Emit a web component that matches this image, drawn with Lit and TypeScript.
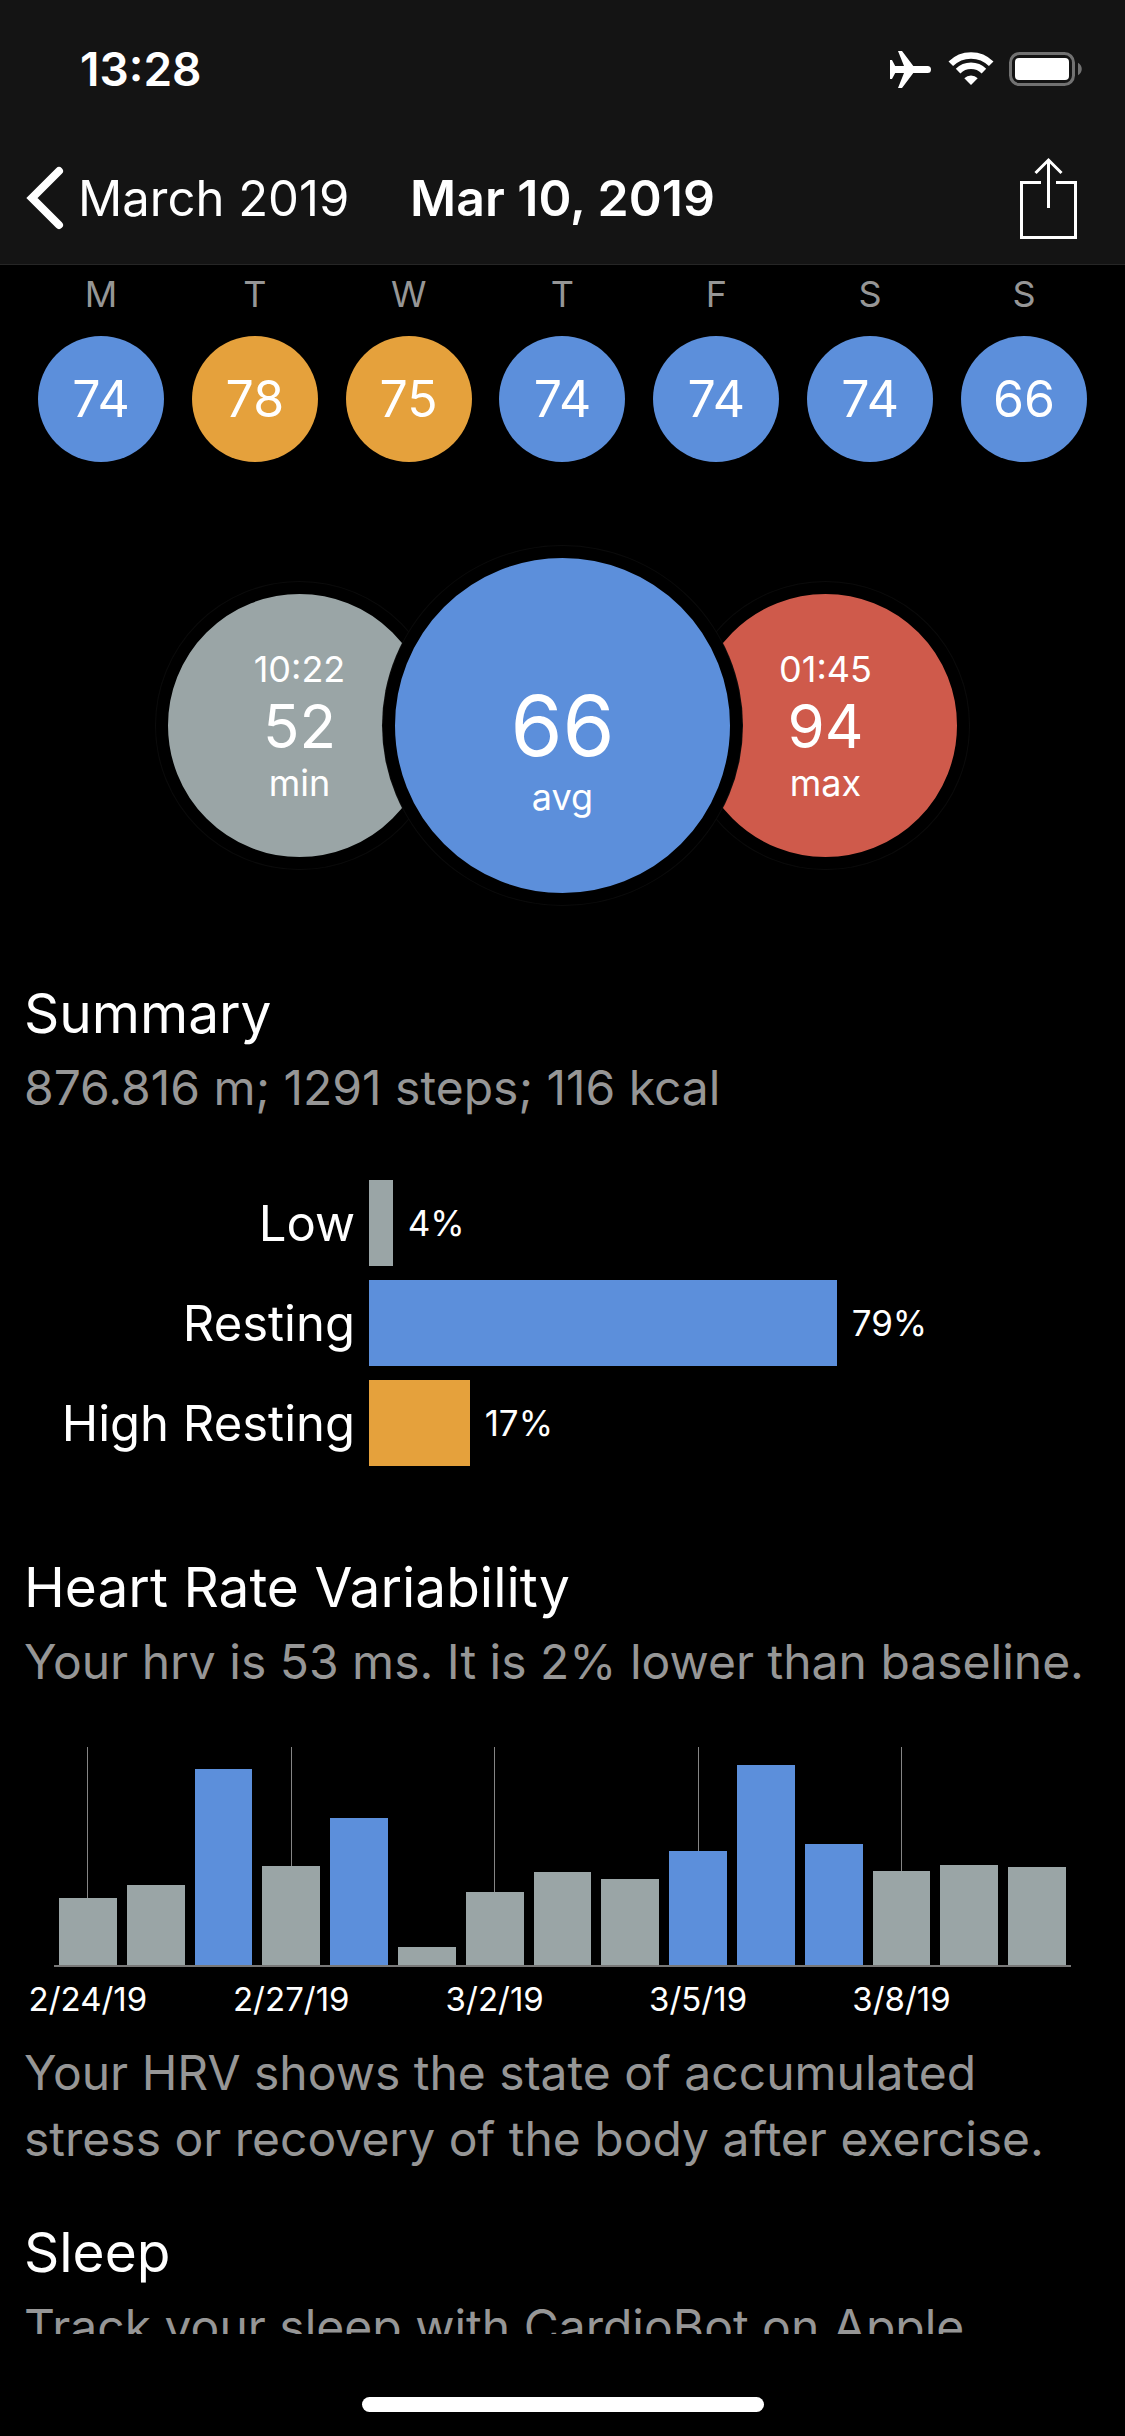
import { LitElement, html, css, svg } from "lit";
import { customElement, property } from "lit/decorators.js";
import { classMap } from "lit/directives/class-map.js";
import { styleMap } from "lit/directives/style-map.js";

type Tone = "low" | "resting" | "high" | "peak";

interface Day {
  letter: string;
  name: string;
  bpm: number;
  tone: Tone;
}

interface Zone {
  label: string;
  percent: number;
  tone: Tone;
}

interface HrvDay {
  value: number;
  tone: Tone;
  date?: string;
}

const DAYS: Day[] = [
  { letter: "M", name: "Monday", bpm: 74, tone: "resting" },
  { letter: "T", name: "Tuesday", bpm: 78, tone: "high" },
  { letter: "W", name: "Wednesday", bpm: 75, tone: "high" },
  { letter: "T", name: "Thursday", bpm: 74, tone: "resting" },
  { letter: "F", name: "Friday", bpm: 74, tone: "resting" },
  { letter: "S", name: "Saturday", bpm: 74, tone: "resting" },
  { letter: "S", name: "Sunday", bpm: 66, tone: "resting" },
];

const ZONES: Zone[] = [
  { label: "Low", percent: 4, tone: "low" },
  { label: "Resting", percent: 79, tone: "resting" },
  { label: "High Resting", percent: 17, tone: "high" },
];

const HRV_MAX = 218;

const HRV: HrvDay[] = [
  { value: 67, tone: "low", date: "2/24/19" },
  { value: 80, tone: "low" },
  { value: 196, tone: "resting" },
  { value: 99, tone: "low", date: "2/27/19" },
  { value: 147, tone: "resting" },
  { value: 18, tone: "low" },
  { value: 73, tone: "low", date: "3/2/19" },
  { value: 93, tone: "low" },
  { value: 86, tone: "low" },
  { value: 114, tone: "resting", date: "3/5/19" },
  { value: 200, tone: "resting" },
  { value: 121, tone: "resting" },
  { value: 94, tone: "low", date: "3/8/19" },
  { value: 100, tone: "low" },
  { value: 98, tone: "low" },
];

const tones = css`
  .low {
    background-color: #9aa5a6;
  }
  .resting {
    background-color: #5c8fdb;
  }
  .high {
    background-color: #e5a13c;
  }
  .peak {
    background-color: #cf5a4b;
  }
`;

@customElement("status-bar")
export class StatusBar extends LitElement {
  static styles = css`
    :host {
      display: flex;
      justify-content: space-between;
      align-items: center;
      height: 54px;
      padding: 42px 42px 36px 80px;
    }
    .time {
      font-size: 46px;
      font-weight: 600;
      line-height: 54px;
    }
    .icons {
      display: flex;
      align-items: center;
    }
    .icons svg {
      display: block;
    }
  `;

  render() {
    return html`
      <div class="time">13:28</div>
      <div class="icons">
        <svg width="194" height="44" viewBox="0 0 194 44" aria-hidden="true">
          ${svg`
            <path fill="#fff" d="M1 13h2l3.200 6H15L9 4h4l11.300 15h14.200a3.500 3.500 0 0 1 0 7H24.300L13 41H9l6-15H6.200L3 32H1z"/>
            <g fill="none" stroke="#fff" stroke-width="6.500">
              <path d="M61.800 16.800a28.600 28.600 0 0 1 40.400 0"/>
              <path d="M69.100 24.100a18.200 18.200 0 0 1 25.800 0"/>
            </g>
            <path fill="#fff" d="M75.300 31.300a9.500 9.500 0 0 1 13.400 0L82 38z"/>
            <rect x="121.500" y="6.500" width="63" height="31" rx="9" fill="none" stroke="#727272" stroke-width="3"/>
            <rect x="126" y="11" width="54" height="22" rx="4" fill="#fff"/>
            <path fill="#727272" d="M189 15.700c5 3 5 9.600 0 12.600z"/>
          `}
        </svg>
      </div>
    `;
  }
}

@customElement("nav-bar")
export class NavBar extends LitElement {
  static styles = css`
    :host {
      display: grid;
      grid-template-columns: 1fr auto 1fr;
      align-items: center;
      height: 132px;
      padding: 0 26px;
      border-bottom: 1px solid #262626;
    }
    .back {
      display: flex;
      align-items: center;
      gap: 14px;
      justify-self: start;
      color: #fff;
      font-size: 49px;
      text-decoration: none;
      white-space: nowrap;
    }
    .title {
      margin: 0;
      font-size: 50px;
      font-weight: 600;
      white-space: nowrap;
    }
    .share {
      justify-self: end;
      margin: 0 22px 0 0;
      padding: 0;
      border: 0;
      background: none;
      color: #fff;
    }
    svg {
      display: block;
    }
  `;

  render() {
    return html`
      <a class="back" href="#march-2019">
        <svg width="38" height="66" viewBox="0 0 38 66" aria-hidden="true">
          <path
            d="M33 6L6 33l27 27"
            fill="none"
            stroke="#fff"
            stroke-width="8"
            stroke-linecap="round"
          />
        </svg>
        March 2019
      </a>
      <h1 class="title">Mar 10, 2019</h1>
      <button class="share" type="button" aria-label="Share">
        <svg width="57" height="82" viewBox="0 0 57 82" aria-hidden="true">
          <path
            d="M21 25.500H1.500V80.500H55.500V25.500H36M28.500 51V2.500M15.500 16L28.500 3L41.500 16"
            fill="none"
            stroke="#fff"
            stroke-width="3"
          />
        </svg>
      </button>
    `;
  }
}

@customElement("week-strip")
export class WeekStrip extends LitElement {
  @property({ attribute: false }) days: Day[] = [];

  static styles = [
    tones,
    css`
      :host {
        display: flex;
        justify-content: space-between;
        padding: 5px 38px 0;
      }
      .day {
        display: flex;
        flex-direction: column;
        align-items: center;
        gap: 18px;
        margin: 0;
        padding: 0;
        border: 0;
        background: none;
        font: inherit;
        color: #fff;
      }
      .letter {
        font-size: 36px;
        line-height: 48px;
        color: #969696;
      }
      .bubble {
        display: flex;
        align-items: center;
        justify-content: center;
        width: 126px;
        height: 126px;
        border-radius: 50%;
        font-size: 50px;
      }
    `,
  ];

  render() {
    return this.days.map(
      (d) => html`
        <button class="day" type="button" title=${d.name}>
          <span class="letter">${d.letter}</span>
          <span class=${classMap({ bubble: true, [d.tone]: true })}>${d.bpm}</span>
        </button>
      `
    );
  }
}

@customElement("rate-circles")
export class RateCircles extends LitElement {
  static styles = [
    tones,
    css`
      :host {
        display: flex;
        justify-content: center;
        align-items: center;
      }
      .circle {
        display: flex;
        flex-direction: column;
        align-items: center;
        justify-content: center;
        box-sizing: border-box;
        width: 287px;
        height: 287px;
        border: 12px solid #000;
        border-radius: 50%;
        box-shadow: 0 0 0 1px #0b0b0b;
        font-size: 36px;
        line-height: 48px;
      }
      .circle .value {
        font-size: 60px;
        line-height: 66px;
      }
      .main {
        z-index: 1;
        width: 359px;
        height: 359px;
        margin: 0 -60px;
        padding-top: 48px;
      }
      .main .value {
        font-size: 84px;
        line-height: 94px;
      }
    `,
  ];

  render() {
    return html`
      <div class="circle low">
        <span>10:22</span>
        <span class="value">52</span>
        <span>min</span>
      </div>
      <div class="circle main resting">
        <span class="value">66</span>
        <span>avg</span>
      </div>
      <div class="circle peak">
        <span>01:45</span>
        <span class="value">94</span>
        <span>max</span>
      </div>
    `;
  }
}

@customElement("zone-bars")
export class ZoneBars extends LitElement {
  @property({ attribute: false }) zones: Zone[] = [];

  static styles = [
    tones,
    css`
      :host {
        display: flex;
        flex-direction: column;
        gap: 14px;
      }
      .row {
        display: grid;
        grid-template-columns: 355px 1fr;
        column-gap: 14px;
        align-items: center;
      }
      .label {
        font-size: 49px;
        text-align: right;
        white-space: nowrap;
      }
      .track {
        display: flex;
        align-items: center;
        gap: 15px;
        padding-right: 164px;
      }
      .bar {
        flex: none;
        height: 86px;
      }
      .percent {
        font-size: 35px;
      }
    `,
  ];

  render() {
    return this.zones.map(
      (z) => html`
        <div class="row">
          <span class="label">${z.label}</span>
          <div class="track">
            <div
              class=${classMap({ bar: true, [z.tone]: true })}
              style=${styleMap({ width: `${z.percent}%` })}
            ></div>
            <span class="percent">${z.percent}%</span>
          </div>
        </div>
      `
    );
  }
}

@customElement("hrv-chart")
export class HrvChart extends LitElement {
  @property({ attribute: false }) days: HrvDay[] = [];

  static styles = [
    tones,
    css`
      :host {
        display: block;
        padding: 0 54px;
      }
      .plot,
      .dates {
        display: grid;
        grid-template-columns: repeat(15, 1fr);
      }
      .plot {
        height: 218px;
        border-bottom: 2px solid #787878;
      }
      .slot {
        display: flex;
        flex-direction: column;
        align-items: center;
        justify-content: flex-end;
        min-width: 0;
        padding: 0 5px;
      }
      .tick::before {
        content: "";
        flex: 1;
        width: 1px;
        background: #858585;
      }
      .bar {
        align-self: stretch;
      }
      .dates {
        padding-top: 12px;
        font-size: 33px;
        line-height: 40px;
      }
      .date {
        display: flex;
        justify-content: center;
        min-width: 0;
        white-space: nowrap;
      }
    `,
  ];

  render() {
    return html`
      <div class="plot">
        ${this.days.map(
          (d) => html`
            <div class=${classMap({ slot: true, tick: !!d.date })}>
              <div
                class=${classMap({ bar: true, [d.tone]: true })}
                style=${styleMap({ height: `${(d.value / HRV_MAX) * 100}%` })}
              ></div>
            </div>
          `
        )}
      </div>
      <div class="dates">
        ${this.days.map((d) => html`<span class="date">${d.date ?? ""}</span>`)}
      </div>
    `;
  }
}

@customElement("app-root")
export class AppRoot extends LitElement {
  static styles = css`
    :host {
      display: flex;
      flex-direction: column;
      height: 100vh;
      background: #000;
      color: #fff;
      font-family: Inter, "Liberation Sans", sans-serif;
    }
    .top {
      flex: none;
      background: #141414;
    }
    .content {
      flex: 1;
      min-height: 0;
      overflow: auto;
      scrollbar-width: none;
    }
    .circles {
      padding: 84px 0 72px;
    }
    .heading {
      margin: 0;
      padding: 0 24px 6px;
      font-size: 55px;
      font-weight: 400;
      line-height: 72px;
    }
    .text {
      margin: 0;
      padding: 0 24px;
      font-size: 48px;
      line-height: 66px;
      color: #969696;
    }
    .zones {
      padding: 59px 0 85px;
    }
    .hrv {
      padding: 52px 0 21px;
    }
    .sleep {
      padding-top: 44px;
    }
    .home {
      flex: none;
      display: flex;
      justify-content: center;
      padding: 63px 0 24px;
    }
    .pill {
      width: 402px;
      height: 15px;
      border-radius: 8px;
      background: #fff;
    }
  `;

  render() {
    return html`
      <header class="top">
        <status-bar></status-bar>
        <nav-bar></nav-bar>
      </header>
      <main class="content">
        <week-strip .days=${DAYS}></week-strip>
        <div class="circles"><rate-circles></rate-circles></div>
        <section>
          <h2 class="heading">Summary</h2>
          <p class="text">876.816 m; 1291 steps; 116 kcal</p>
          <div class="zones"><zone-bars .zones=${ZONES}></zone-bars></div>
        </section>
        <section>
          <h2 class="heading">Heart Rate Variability</h2>
          <p class="text">Your hrv is 53 ms. It is 2% lower than baseline.</p>
          <div class="hrv"><hrv-chart .days=${HRV}></hrv-chart></div>
          <p class="text">
            Your HRV shows the state of accumulated stress or recovery of the body after exercise.
          </p>
        </section>
        <section class="sleep">
          <h2 class="heading">Sleep</h2>
          <p class="text">Track your sleep with CardioBot on Apple</p>
        </section>
      </main>
      <div class="home"><div class="pill"></div></div>
    `;
  }
}
